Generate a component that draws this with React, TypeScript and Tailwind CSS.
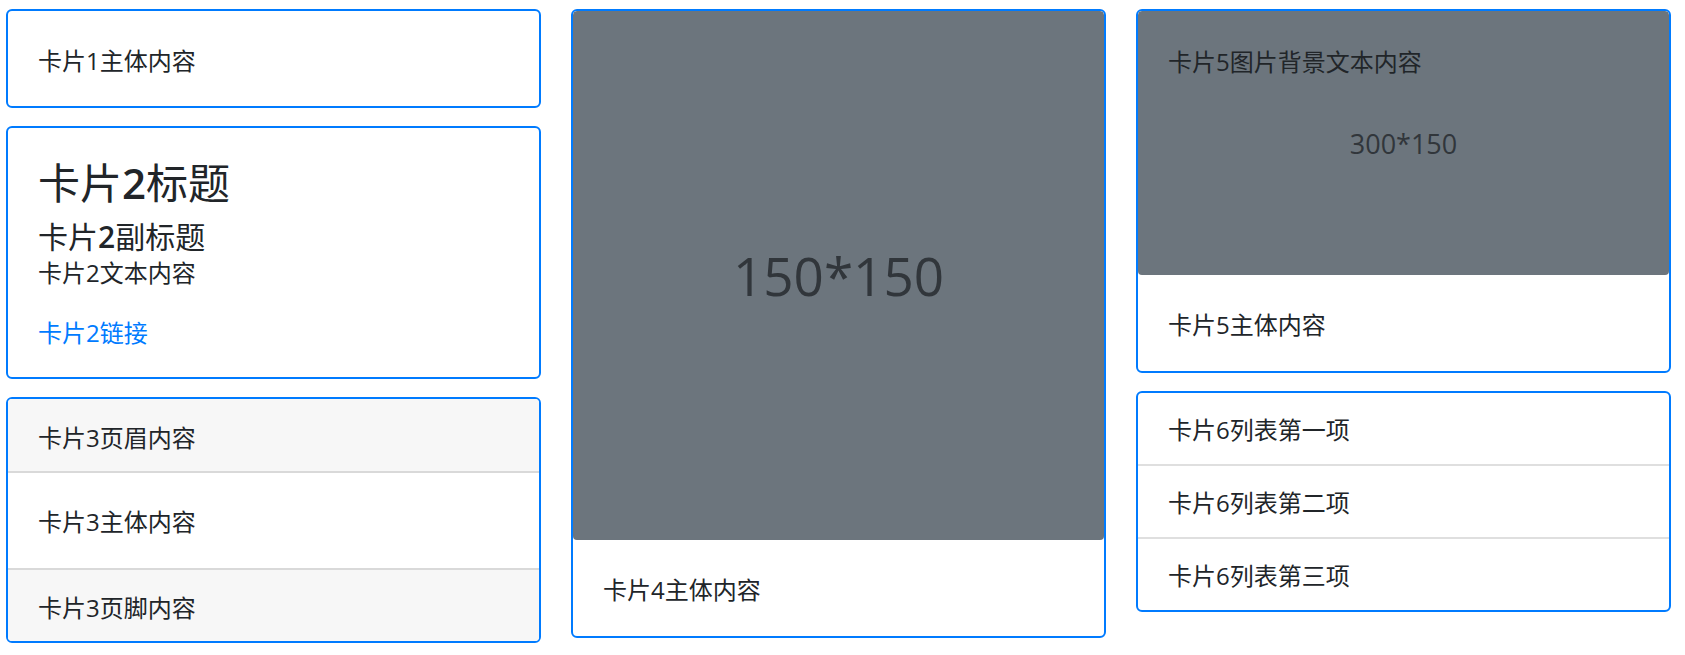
import React from "react";

const BODY_FONT = "font-['Open_Sans','Noto_Sans_CJK_SC',sans-serif]";

type CardProps = {
  children: React.ReactNode;
};

const Card = ({ children }: CardProps) => {
  return (
    <div className="overflow-hidden rounded-[6px] border-2 border-[#007bff] bg-white">
      {children}
    </div>
  );
};

const CardBody = ({ children }: CardProps) => {
  return <div className="px-[30px] pb-[27px] pt-[32px]">{children}</div>;
};

const App = () => {
  return (
    <div
      className={`min-h-screen bg-white pl-[6px] pt-[9px] text-[24px] leading-[36px] text-[#212529] ${BODY_FONT}`}
    >
      <div className="grid w-[1665px] grid-cols-3 items-start gap-x-[30px]">
        {/* column 1 */}
        <div className="flex flex-col gap-[18px]">
          <Card>
            <CardBody>卡片1主体内容</CardBody>
          </Card>

          <Card>
            <div className="px-[30px] pb-[26px] pt-[30px]">
              <h3 className="mb-[12px] text-[42px] leading-[49px] font-normal">
                卡片<span className="font-semibold">2</span>标题
              </h3>
              <h5 className="text-[30px] leading-[36px] font-normal">
                卡片<span className="font-semibold">2</span>副标题
              </h5>
              <p className="mb-[24px]">卡片2文本内容</p>
              <a href="#" className="text-[#007bff]">
                卡片2链接
              </a>
            </div>
          </Card>

          <Card>
            <div className="border-b-2 border-[#d9d9d9] bg-[#f7f7f7] px-[30px] pb-[15px] pt-[21px]">
              卡片3页眉内容
            </div>
            <div className="px-[30px] pb-[28px] pt-[31px]">卡片3主体内容</div>
            <div className="border-t-2 border-[#d9d9d9] bg-[#f7f7f7] px-[30px] pb-[15px] pt-[20px]">
              卡片3页脚内容
            </div>
          </Card>
        </div>

        {/* column 2 */}
        <div className="flex flex-col gap-[19px]">
          <Card>
            <div className="flex h-[529px] w-full items-center justify-center rounded-[4px] bg-[#6c757d]">
              <span className="font-['Open_Sans',sans-serif] text-[53px] leading-none text-[#31363b]">
                150*150
              </span>
            </div>
            <div className="px-[30px] pb-[28px] pt-[32px]">卡片4主体内容</div>
          </Card>
        </div>

        {/* column 3 */}
        <div className="flex flex-col gap-[18px]">
          <Card>
            <div className="relative flex h-[264px] w-full items-center justify-center rounded-[4px] bg-[#6c757d]">
              <span className="font-['Open_Sans',sans-serif] text-[27px] leading-none text-[#31363b]">
                300*150
              </span>
              <div className="absolute inset-0 px-[30px] pt-[33px]">
                卡片5图片背景文本内容
              </div>
            </div>
            <div className="px-[30px] pb-[28px] pt-[32px]">卡片5主体内容</div>
          </Card>

          <Card>
            <ul className="divide-y-2 divide-[#dfdfdf]">
              <li className="px-[30px] pb-[16px] pt-[19px]">卡片6列表第一项</li>
              <li className="px-[30px] pb-[16px] pt-[19px]">卡片6列表第二项</li>
              <li className="px-[30px] pb-[16px] pt-[19px]">卡片6列表第三项</li>
            </ul>
          </Card>
        </div>
      </div>
    </div>
  );
};

export default App;
